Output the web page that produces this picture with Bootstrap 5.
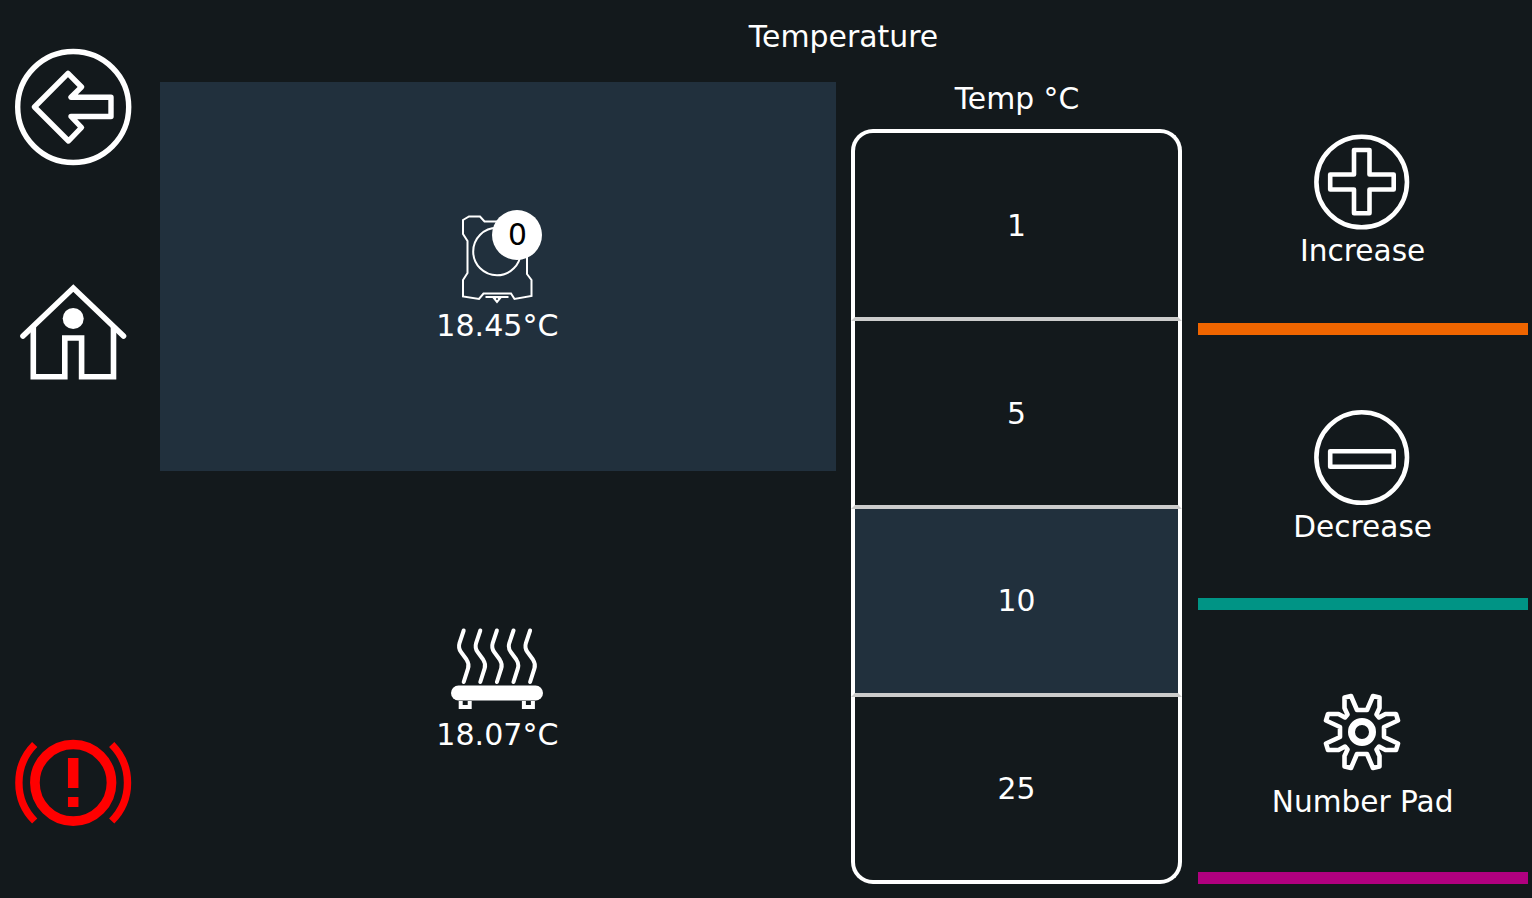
<!DOCTYPE html>
<html lang="en">
<head>
<meta charset="utf-8">
<meta name="viewport" content="width=device-width, initial-scale=1">
<title>Temperature</title>
<link href="https://cdn.jsdelivr.net/npm/bootstrap@5.3.0/dist/css/bootstrap.min.css" rel="stylesheet">
<style>
body{background:#13191c;color:#fff;font-family:"DejaVu Sans",sans-serif;font-size:29.8px;line-height:36px;overflow:hidden}
svg{display:block}
.side{width:155px;padding:48px 9px 70px 0}
.side button{background:none;border:0;padding:0;color:#fff}
.home{margin-top:116px}
.heading{height:74px;font-size:29.9px;line-height:74px;font-weight:400}
.readings{width:676.2px;margin-left:4.8px;padding-top:7.6px}
.reading{height:389.6px;padding:130.5px 0 0;border-radius:0;color:#fff;border:0;background:none}
.reading.active{background:#21303d}
.reading + .reading{padding-top:151.5px}
.reading > :last-child{font-size:30.1px;margin-top:1px;margin-left:-1px}
.reading + .reading > :last-child{margin-top:2px}
.reading svg{margin-left:-1px}
.num{position:absolute;left:44px;top:-2px;width:50px;height:50px;background:#fff;color:#000;line-height:50px}
.steps{width:331px;margin-left:15px}
.step-label{height:55.4px;line-height:49px;padding-left:1px}
.step{height:187.6px;border:4px solid #fff;border-top:0;border-bottom-color:#ccc;background:none;color:#fff;padding:1px 0 0}
.step.first{height:192px;border-top:4px solid #fff;border-radius:22px 22px 0 0}
.step.last{border-bottom-color:#fff;border-radius:0 0 22px 22px}
.step.active{background:#21303d}
.actions{width:330px;margin:-13.5px 0 0 15.7px}
.action{height:274.6px;background:none;color:#fff;border:0;border-bottom:12px solid;padding:73px 1px 0 0}
.action span{margin-top:2px;font-size:29.6px;padding-left:1px}
.action.orange{padding-top:72px}
.action.teal span,.action.pink span{margin-top:3px}
.orange{border-color:#ef6500}.teal{border-color:#009485}.pink{border-color:#b0007f}
</style>
<script src="https://cdn.jsdelivr.net/npm/bootstrap@5.3.0/dist/js/bootstrap.bundle.min.js"></script>
</head>
<body class="vh-100 d-flex">
<nav class="side d-flex flex-column align-items-center flex-shrink-0">
  <button aria-label="Back"><svg width="118" height="118" viewBox="14 48 118 118" fill="none" stroke="#fff" stroke-width="5.4" stroke-linejoin="round"><circle cx="73.200" cy="107" r="55.500"/><path d="M34.500 107 68 73.300 81.500 87 71 97.300H111V116.500H71L81.500 127.500 68.500 141Z"/></svg></button>
  <button aria-label="Home" class="home"><svg width="118" height="102" viewBox="14 282 118 102" fill="none" stroke="#fff" stroke-width="5.6"><path d="M23 336 73.300 288 123.500 336" stroke-linecap="round"/><path d="M33.300 327V376.800H64.800V338H81.600V376.800H113.500V327"/><circle cx="73.200" cy="318.500" r="10.500" fill="#fff" stroke="none"/></svg></button>
  <button aria-label="Emergency stop" class="mt-auto"><svg width="118" height="90" viewBox="14 738 118 90" fill="none" stroke="#f00"><circle cx="73.200" cy="782.800" r="38.300" stroke-width="9.700"/><path d="M34.700 744.500A54.200 54.200 0 0 0 34.700 821M111.700 744.500A54.200 54.200 0 0 1 111.700 821" stroke-width="7.400"/><path d="M73.200 758V788M73.200 797V807" stroke-width="10.500"/></svg></button>
</nav>
<main class="flex-grow-1 d-flex flex-column">
  <h1 class="heading text-center m-0">Temperature</h1>
  <div class="d-flex flex-grow-1">
    <section class="readings">
      <button class="reading active w-100 d-flex flex-column align-items-center">
        <span class="position-relative"><svg width="100" height="95" viewBox="447 212 100 95" fill="none" stroke="#fff" stroke-width="2"><path d="M463 220 469 216.500H480L484.500 221.500H510L514 216.500H525L531 220V235L527 241V274L531.500 280V296L514.500 299 511 293.500H483.500L479 299 463 296.500V280L467.500 273V241L463 234Z"/><circle cx="497" cy="251.500" r="23.800"/><path d="M485.500 297H508.500"/><path d="M492.500 298H501.500L497 303.500Z" fill="#fff" stroke="none"/><circle cx="497" cy="299" r="1" fill="#21303d" stroke="none"/></svg><span class="num rounded-circle">0</span></span>
        <span>18.45°C</span>
      </button>
      <button class="reading w-100 d-flex flex-column align-items-center">
        <svg width="100" height="92" viewBox="447 622 100 92" fill="none" stroke="#fff" stroke-width="4" stroke-linecap="round"><path id="wave" d="M463.700 629.500 459.500 642Q458 647 461 651L466.500 658.500Q469.500 663 468 667.500L463.700 681"/><use href="#wave" x="16.600"/><use href="#wave" x="33.200"/><use href="#wave" x="49.800"/><use href="#wave" x="66.400"/><rect x="451" y="684.500" width="92" height="15" rx="7.500" fill="#fff" stroke="none"/><path d="M460.700 700V706H469.700V700M523.900 700V706H532.900V700" stroke-linecap="butt"/></svg>
        <span>18.07°C</span>
      </button>
    </section>
    <section class="steps d-flex flex-column">
      <div class="step-label text-center">Temp °C</div>
      <button class="step first">1</button>
      <button class="step">5</button>
      <button class="step active">10</button>
      <button class="step last">25</button>
    </section>
    <section class="actions d-flex flex-column">
      <button class="action orange d-flex flex-column align-items-center"><svg width="98" height="98" viewBox="1313 133 98 98" fill="none" stroke="#fff" stroke-width="4.600"><circle cx="1361.700" cy="182" r="45.300"/><path stroke-linejoin="round" d="M1354 150H1369.500V174.500H1393.700V189.500H1369.500V213.300H1354V189.500H1330.200V174.500H1354Z"/></svg><span>Increase</span></button>
      <button class="action teal d-flex flex-column align-items-center"><svg width="98" height="98" viewBox="1313 408.500 98 98" fill="none" stroke="#fff" stroke-width="4.600"><circle cx="1361.700" cy="458" r="45.300"/><rect x="1330.200" y="451.700" width="63.500" height="15.500" stroke-linejoin="round"/></svg><span>Decrease</span></button>
      <button class="action pink d-flex flex-column align-items-center"><svg width="98" height="98" viewBox="-49 -49 98 98" fill="none" stroke="#fff" stroke-width="4.600"><circle r="10.500" stroke-width="7"/><path stroke-linejoin="round" d="M-5-22H5L11-36 17.500-34.500V-24L14.500-17.500 17-14.500 23.500-18H34L36-11.500 22-5V5L36 11.500 34 18H23.500L17 14.500 14.500 17.500 17.500 24V34.500L11 36 5 22H-5L-11 36-17.500 34.500V24L-14.500 17.500-17 14.500-23.500 18H-34L-36 11.500-22 5V-5L-36-11.500-34-18H-23.500L-17-14.500-14.500-17.500-17.500-24V-34.500L-11-36Z"/></svg><span>Number Pad</span></button>
    </section>
  </div>
</main>
</body>
</html>
